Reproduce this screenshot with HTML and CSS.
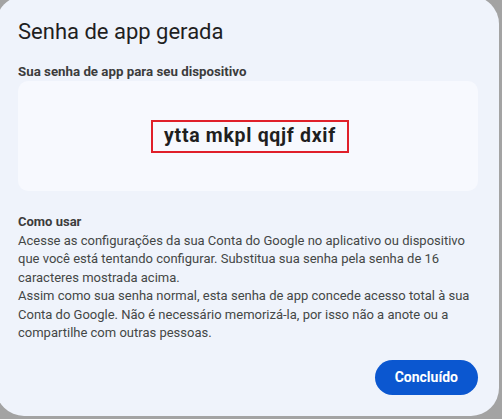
FILE: index.html
```html
<!DOCTYPE html>
<html lang="pt-BR">

<head>
    <meta charset="UTF-8">
    <meta name="viewport" content="width=device-width, initial-scale=1.0">
    <title>Senha de app gerada</title>
    <link rel="stylesheet" href="styles.css">
</head>

<body>
    <div class="dialog">
        <h1 class="title">Senha de app gerada</h1>
        <div class="label">Sua senha de app para seu dispositivo</div>

        <div class="password-box">
            <span class="password">ytta mkpl qqjf dxif</span>
        </div>

        <div class="help">
            <div class="help-title">Como usar</div>
            <p>Acesse as configurações da sua Conta do Google no aplicativo ou dispositivo
                que você está tentando configurar. Substitua sua senha pela senha de 16
                caracteres mostrada acima.</p>
            <p>Assim como sua senha normal, esta senha de app concede acesso total à sua
                Conta do Google. Não é necessário memorizá-la, por isso não a anote ou a
                compartilhe com outras pessoas.</p>
        </div>

        <div class="actions">
            <button class="button">Concluído</button>
        </div>
    </div>
</body>

</html>
```

FILE: styles.css
```css
body {
    margin: 0;
    background: #a3a3a3;
    font-family: Roboto, "Liberation Sans", Arial, sans-serif;
    overflow: hidden;
    height: 419px;
}

.dialog {
    width: 503px;
    height: 420px;
    margin: -4px 0 0 -4px;
    box-sizing: border-box;
    padding: 22px 21px 0 22px;
    background: #eff3fb;
    border-radius: 28px;
    display: flex;
    flex-direction: column;
}

.title {
    margin: 0;
    font-size: 22px;
    font-weight: 400;
    line-height: 28px;
    color: #1f1f1f;
}

.label {
    margin-top: 18px;
    font-size: 13.3px;
    font-weight: 700;
    line-height: 16px;
    color: #3c3c3c;
}

.password-box {
    margin-top: 1px;
    height: 110px;
    background: #f7f9fe;
    border-radius: 10px;
    display: flex;
    justify-content: center;
    align-items: center;
}

.password {
    border: 2px solid #e0202a;
    padding: 2px 11px 3px 11px;
    margin-left: 4px;
    font-size: 19.5px;
    font-weight: 700;
    line-height: 24px;
    color: #1f1f1f;
    letter-spacing: 0.7px;
}

.help {
    margin-top: 22px;
    font-size: 13px;
    line-height: 18.5px;
    color: #444746;
}

.help-title {
    font-weight: 700;
    color: #3c3c3c;
}

.help p {
    margin: 0;
}

.actions {
    display: flex;
    justify-content: flex-end;
    margin-top: 17px;
}

.button {
    height: 35px;
    padding: 0 20px;
    background: #0b57d0;
    border: none;
    border-radius: 18px;
    color: #fff;
    font-family: inherit;
    font-size: 14px;
    font-weight: 700;
    cursor: pointer;
}
```
